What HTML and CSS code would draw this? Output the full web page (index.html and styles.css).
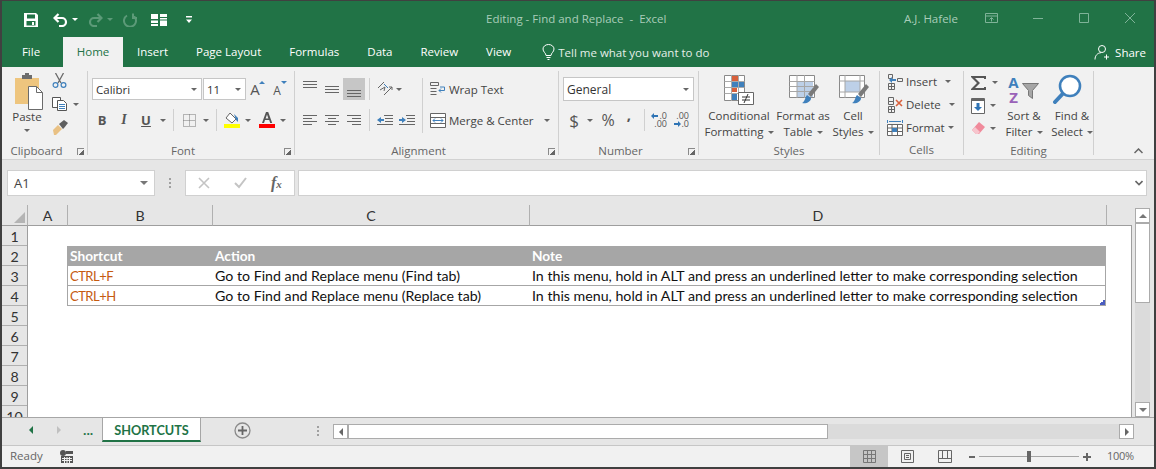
FILE: index.html
```html
<!DOCTYPE html>
<html>
<head>
  <title>Editing - Find and Replace - Excel</title>
  <link rel="stylesheet" href="styles.css">
</head>
<body>
<div class="window">

  <div class="titlebar">
    <div class="qat">
      <svg width="14" height="14" viewBox="0 0 14 14"><path fill="#fff" d="M0 0h12l2 2v12H0z"/><path fill="#217346" d="M3 1.500h8v4H3zM2.500 8h9v4.500h-9z"/><path fill="#fff" d="M8 9h2v3H8z"/></svg>
      <svg class="q-undo" width="15" height="14" viewBox="0 0 15 14"><path fill="none" stroke="#fff" stroke-width="2.200" d="M5.500 1L1.500 5l4 4M2 5h7a4 4 0 0 1 0 8H6"/></svg>
      <span class="caret white q-c1"></span>
      <svg class="q-redo" width="15" height="14" viewBox="0 0 15 14"><path fill="none" stroke="#5c9a78" stroke-width="2.200" d="M9.500 1l4 4-4 4M13 5H6a4 4 0 0 0 0 8h3"/></svg>
      <span class="caret faded q-c2"></span>
      <svg class="q-repeat" width="14" height="14" viewBox="0 0 14 14"><path fill="none" stroke="#5c9a78" stroke-width="2" d="M4 2.500a6 6 0 1 0 6 0M10 .500v4.500h4"/></svg>
      <svg class="q-form" width="16" height="12" viewBox="0 0 16 12"><path fill="#fff" d="M0 0h7v5H0zM9 0h7v3H9zM9 4h7v1.500H9zM0 6.500h7V9H0zM0 10h7v2H0zM9 6.500h7V12H9z"/></svg>
      <svg class="q-more" width="6" height="8" viewBox="0 0 6 8"><path fill="#fff" d="M0 0h6v1.500H0zM0 3.500h6L3 7z"/></svg>
    </div>
    <div class="doc-title">Editing - Find and Replace &nbsp;-&nbsp; Excel</div>
    <div class="user">A.J. Hafele</div>
    <div class="win-btns">
      <svg width="13" height="10" viewBox="0 0 13 10"><path fill="none" stroke="#7fb398" d="M.5.500h12v9H.5zM.5 3h12M6.500 8.500V5M4.500 6.500l2-2 2 2"/></svg>
      <svg class="w-min" width="10" height="10" viewBox="0 0 10 10"><path stroke="#7fb398" d="M0 5.500h10"/></svg>
      <svg class="w-max" width="10" height="10" viewBox="0 0 10 10"><path fill="none" stroke="#7fb398" d="M.5.500h9v9h-9z"/></svg>
      <svg class="w-close" width="10" height="10" viewBox="0 0 10 10"><path stroke="#7fb398" d="M0 0l10 10M10 0L0 10"/></svg>
    </div>
  </div>

  <div class="tabbar">
    <a class="tab tab-file">File</a>
    <a class="tab tab-active">Home</a>
    <a class="tab">Insert</a>
    <a class="tab">Page Layout</a>
    <a class="tab">Formulas</a>
    <a class="tab">Data</a>
    <a class="tab">Review</a>
    <a class="tab">View</a>
    <div class="tell">
      <svg width="13" height="16" viewBox="0 0 13 16"><path fill="none" stroke="#fff" d="M4 11.500C4 9 1 8 1 5a5.500 4.500 0 0 1 11 0c0 3-3 4-3 6.500zM4.500 13.500h4M5.500 15.500h2"/></svg>
      <span>Tell me what you want to do</span>
    </div>
    <div class="share">
      <svg width="16" height="16" viewBox="0 0 16 16"><path fill="none" stroke="#fff" d="M8 1.500a3.500 3.500 0 0 1 0 7 3.500 3.500 0 0 1 0-7zM1 15.500c0-4 2.500-6.500 6-6.800M12.500 10.500v5M10 13h5"/></svg>
      <span>Share</span>
    </div>
  </div>

  <div class="ribbon">

    <div class="group g-clip launcher-group">
      <div class="g-body">
        <div class="paste">
          <svg class="paste-icon" width="30" height="37" viewBox="0 0 30 37"><path fill="#eec57e" d="M1 5h24v26H1z"/><path fill="#6d6d6d" d="M8 2h3V0h4v2h3v4H8z"/><path fill="#fff" stroke="#6b6b6b" d="M14.500 13.500h8l6 6v17h-14z"/><path fill="none" stroke="#6b6b6b" d="M22.500 13.500v6h6"/></svg>
          <span class="paste-label">Paste</span>
          <span class="caret"></span>
        </div>
        <div class="clip-tools">
          <svg width="15" height="15" viewBox="0 0 15 15"><path fill="none" stroke="#6a6a6a" stroke-width="1.300" d="M3.500 0l5.500 10M11.500 0L6 10"/><circle cx="3.500" cy="12" r="2.400" fill="none" stroke="#3f80bc" stroke-width="1.200"/><circle cx="11.500" cy="12" r="2.400" fill="none" stroke="#3f80bc" stroke-width="1.200"/></svg>
          <div class="clip-copy">
            <svg width="15" height="14" viewBox="0 0 15 14"><path fill="#fff" stroke="#555" d="M.500.500h8v10h-8z"/><path fill="#fff" stroke="#555" d="M5.500 3.500h6l3 3v7h-9z"/><path stroke="#3f80bc" d="M7 7.500h6M7 9.500h6M7 11.500h6"/></svg>
            <span class="caret"></span>
          </div>
          <svg width="17" height="15" viewBox="0 0 17 15"><path fill="#e9c184" d="M1 10l5-5 4 4-6 6H2z"/><path fill="#5f5f5f" d="M7 4l5-4 4 3-4 5-1 1z"/></svg>
        </div>
      </div>
      <div class="g-label">Clipboard<span class="launcher"></span></div>
    </div>

    <div class="group g-font launcher-group">
      <div class="g-body g-rows">
        <div class="row">
          <div class="combo combo-font"><span>Calibri</span><span class="caret"></span></div>
          <div class="combo combo-size"><span>11</span><span class="caret"></span></div>
          <div class="tool grow"><span class="letter-a">A</span><i class="tri-up"></i></div>
          <div class="tool shrink"><span class="letter-a small">A</span><i class="tri-down"></i></div>
        </div>
        <div class="row row-font2">
          <div class="tool bold">B</div>
          <div class="tool ital">I</div>
          <div class="tool under">U</div>
          <span class="caret-box"><span class="caret"></span></span>
          <span class="sep"></span>
          <div class="tool"><svg width="13" height="13" viewBox="0 0 13 13"><path fill="none" stroke="#777" stroke-dasharray="1 1" d="M.500.500h12v12H.500zM6.500 .500v12M.500 6.500h12"/></svg></div>
          <span class="caret-box"><span class="caret"></span></span>
          <span class="sep"></span>
          <div class="tool"><svg width="16" height="16" viewBox="0 0 16 16"><path fill="#fff" stroke="#666" d="M6 1l6 6-4 4-6-5z"/><path fill="#3f80bc" d="M10 2l4 4v4l-2-2z"/><path fill="#ffff00" d="M0 12h16v4H0z"/></svg></div>
          <span class="caret-box narrow"><span class="caret"></span></span>
          <div class="tool tool-color"><svg width="16" height="16" viewBox="0 0 16 16"><path fill="#555" d="M7 0h2.200l4 11h-2l-1-3H6l-1 3H3zM6.600 6.400h2.800L8 2.400z"/><path fill="#f00" d="M0 12h16v4H0z"/></svg></div>
          <span class="caret-box narrow"><span class="caret"></span></span>
        </div>
      </div>
      <div class="g-label">Font<span class="launcher"></span></div>
    </div>

    <div class="group g-align launcher-group">
      <div class="g-body">
        <div class="g-rows align-left">
          <div class="row">
            <div class="tool v-top"><svg width="14" height="7" viewBox="0 0 14 7"><path stroke="#666" d="M0 .500h14M0 3.500h14M0 6.500h14"/></svg></div>
            <div class="tool v-mid"><svg width="14" height="7" viewBox="0 0 14 7"><path stroke="#666" d="M0 .500h14M0 3.500h14M0 6.500h14"/></svg></div>
            <div class="tool t-on"><svg width="14" height="7" viewBox="0 0 14 7"><path stroke="#666" d="M0 .500h14M0 3.500h14M0 6.500h14"/></svg></div>
            <span class="sep"></span>
            <div class="tool"><svg width="16" height="16" viewBox="0 0 16 16"><path fill="none" stroke="#666" d="M1 7l6-6M3 9l5-3-1 4M7 14l8-8M12 6h3v3"/><path fill="none" stroke="#3f80bc" d="M7 3l4 4"/></svg></div>
            <span class="caret-box tiny"><span class="caret"></span></span>
          </div>
          <div class="row">
            <div class="tool"><svg width="14" height="11" viewBox="0 0 14 11"><path stroke="#666" d="M0 .500h14M0 3.500h9M0 6.500h14M0 9.500h9"/></svg></div>
            <div class="tool"><svg width="14" height="11" viewBox="0 0 14 11"><path stroke="#666" d="M0 .500h14M3 3.500h8M0 6.500h14M3 9.500h8"/></svg></div>
            <div class="tool"><svg width="14" height="11" viewBox="0 0 14 11"><path stroke="#666" d="M0 .500h14M5 3.500h9M0 6.500h14M5 9.500h9"/></svg></div>
            <span class="sep"></span>
            <div class="tool"><svg width="16" height="11" viewBox="0 0 16 11"><path stroke="#666" d="M7 .500h9M8 3.500h8M8 6.500h8M0 9.500h16"/><path fill="#3f80bc" d="M0 5l4-3v2h3v2H4v2z"/></svg></div>
            <div class="tool"><svg width="16" height="11" viewBox="0 0 16 11"><path stroke="#666" d="M7 .500h9M8 3.500h8M8 6.500h8M0 9.500h16"/><path fill="#3f80bc" d="M7 5L3 2v2H0v2h3v2z"/></svg></div>
          </div>
        </div>
        <span class="sep tall"></span>
        <div class="g-rows align-right">
          <div class="row text-tool">
            <svg width="16" height="15" viewBox="0 0 16 15"><path fill="none" stroke="#666" d="M.500.500h8v3h-8zM.500 6.500h6M.500 9.500h6M.500 12.500h6"/><path fill="none" stroke="#3f80bc" d="M10 5h4.500v3.500H9M11 6.500L9 8.500l2 2"/></svg>
            <span>Wrap Text</span>
          </div>
          <div class="row text-tool">
            <svg width="16" height="15" viewBox="0 0 16 15"><path fill="#fff" stroke="#666" d="M.500.500h15v14H.500zM.500 4.500h15M.500 10.500h15"/><path fill="none" stroke="#3f80bc" d="M3 7.500h10M5 5.500l-2 2 2 2M11 5.500l2 2-2 2"/></svg>
            <span>Merge &amp; Center</span>
            <span class="caret merge-caret"></span>
          </div>
        </div>
      </div>
      <div class="g-label">Alignment<span class="launcher"></span></div>
    </div>

    <div class="group g-number launcher-group">
      <div class="g-body g-rows">
        <div class="row">
          <div class="combo combo-num"><span>General</span><span class="caret"></span></div>
        </div>
        <div class="row">
          <div class="tool sym">$</div>
          <span class="caret-box narrow"><span class="caret"></span></span>
          <div class="tool sym pct">%</div>
          <div class="tool sym comma">,</div>
          <span class="sep"></span>
          <div class="tool dec">
            <div class="dec-line"><i class="arrow left"></i><span>.0</span></div>
            <div class="dec-line"><span>.00</span></div>
          </div>
          <div class="tool dec">
            <div class="dec-line"><span>.00</span></div>
            <div class="dec-line"><i class="arrow"></i><span>.0</span></div>
          </div>
        </div>
      </div>
      <div class="g-label">Number<span class="launcher"></span></div>
    </div>

    <div class="group g-styles">
      <div class="g-body">
        <div class="big big-cond">
          <svg width="30" height="30" viewBox="0 0 30 30"><path fill="#fff" stroke="#8a8a8a" d="M.500.500h20v25H.500z"/><path fill="#d8603c" d="M8 1h6v5H8zM8 12h5v5H8z"/><path fill="#3f80bc" d="M8 6h12v6H8zM8 18h5v7H8z"/><path fill="none" stroke="#aaa" d="M.500 6.500h20M.500 12.500h20M.500 18.500h20M7.500 0v26M14.500 0v26"/><path fill="#fff" stroke="#666" d="M14.500 17.500h15v12h-15z"/><path stroke="#333" d="M18 22h8M18 25h8M20 28l4-9"/></svg>
          <span>Conditional</span>
          <span>Formatting<i class="caret inl"></i></span>
        </div>
        <div class="big big-table">
          <svg width="30" height="30" viewBox="0 0 30 30"><path fill="#fff" stroke="#8a8a8a" d="M.500.500h25v22H.500z"/><path fill="#bdd0e8" d="M8 6h16v16H8z"/><path fill="none" stroke="#a6a6a6" d="M.500 6.500h25M.500 11.500h25M.500 16.500h25M8 0v23M15.500 0v23"/><path fill="#7a7a7a" d="M27 9l3 3-8 10-3-3z"/><path fill="#3f80bc" d="M18 20l4 3c0 4-5 6-9 5 3-1 3-6 5-8z"/></svg>
          <span>Format as</span>
          <span>Table<i class="caret inl"></i></span>
        </div>
        <div class="big big-cell">
          <svg width="30" height="30" viewBox="0 0 30 30"><path fill="#fff" stroke="#8a8a8a" d="M.500.500h25v22H.500z"/><path fill="#bdd0e8" d="M6 6h15v11H6z"/><path fill="none" stroke="#a6a6a6" d="M.500 6h25M.500 17h25M6 0v23M21 0v23"/><path fill="#7a7a7a" d="M27 9l3 3-8 10-3-3z"/><path fill="#3f80bc" d="M18 20l4 3c0 4-5 6-9 5 3-1 3-6 5-8z"/></svg>
          <span>Cell</span>
          <span>Styles<i class="caret inl"></i></span>
        </div>
      </div>
      <div class="g-label">Styles</div>
    </div>

    <div class="group g-cells">
      <div class="g-body g-stack">
        <div class="cell-row">
          <svg width="16" height="16" viewBox="0 0 16 16"><path fill="none" stroke="#666" d="M1.500 9.500h6v6h-6zM1.500 12.500h6M4.500 9.500v6M1.500.500h4v4h-4zM10.500 4.500h5v3h-5z"/><path fill="#3f80bc" d="M2 6l3-3v2h4v2H5v2z"/></svg>
          <span>Insert</span><span class="caret c-ins"></span>
        </div>
        <div class="cell-row">
          <svg width="16" height="16" viewBox="0 0 16 16"><path fill="none" stroke="#666" d="M1.500 9.500h6v6h-6zM1.500 12.500h6M4.500 9.500v6M1.500.500h5v4h-5zM1.500 4.500h5v3h-5z"/><path stroke="#d8603c" stroke-width="1.600" d="M9 3l6 6M15 3l-6 6"/></svg>
          <span>Delete</span><span class="caret c-del"></span>
        </div>
        <div class="cell-row">
          <svg width="16" height="16" viewBox="0 0 16 16"><path fill="#fff" stroke="#666" d="M.500 4.500h15v11H.500zM.500 8h15M.500 11.500h15M5 4.500v11M10.500 4.500v11"/><path fill="#3f80bc" d="M5 8h5v4H5zM0 0h1v3H0zM15 0h1v3h-1zM2 1h12v1H2z"/></svg>
          <span>Format</span><span class="caret c-fmt"></span>
        </div>
      </div>
      <div class="g-label">Cells</div>
    </div>

    <div class="group g-edit">
      <div class="g-body">
        <div class="edit-col">
          <div class="edit-row e1">
            <svg width="16" height="14" viewBox="0 0 16 14"><path fill="#555" d="M0 0h15v3h-2V2H4l5 5-5 5h9v-1h2v3H0v-1l6-6-6-6z"/></svg>
            <span class="caret"></span>
          </div>
          <div class="edit-row e2">
            <svg width="14" height="16" viewBox="0 0 14 16"><path fill="#fff" stroke="#666" d="M.500.500h13v15h-13z"/><path fill="#666" d="M1 1h12v2H1z"/><path fill="#2f74b5" d="M5.500 5h3v4H11l-4 4-4-4h2.500z"/></svg>
            <span class="caret"></span>
          </div>
          <div class="edit-row e3">
            <svg width="14" height="13" viewBox="0 0 14 13"><path fill="#f08a9b" d="M8 0l6 5-6 7H5L1 8z"/><path fill="#f7c5cd" d="M1 8l3-3 5 5-2 2H5z"/></svg>
            <span class="caret"></span>
          </div>
        </div>
        <div class="big big-sort">
          <div class="sort-icon">
            <div class="az"><span class="az-a">A</span><span class="az-z">Z</span></div>
            <svg width="17" height="17" viewBox="0 0 17 17"><path fill="#a6a6a6" stroke="#777" d="M.500.500h16l-6 7v8l-4-3v-5z"/></svg>
          </div>
          <span>Sort &amp;</span>
          <span>Filter<i class="caret inl"></i></span>
        </div>
        <div class="big big-find">
          <svg width="30" height="30" viewBox="0 0 30 30"><circle cx="18" cy="12" r="10" fill="#fff" stroke="#3f80bc" stroke-width="2.600"/><path stroke="#3f80bc" stroke-width="4" stroke-linecap="round" d="M10.500 20L3 28"/></svg>
          <span>Find &amp;</span>
          <span>Select<i class="caret inl"></i></span>
        </div>
      </div>
      <div class="g-label">Editing</div>
    </div>

    <svg class="collapse" width="9" height="6" viewBox="0 0 9 6"><path fill="none" stroke="#666" stroke-width="1.500" d="M.500 5l4-4 4 4"/></svg>
  </div>

  <div class="formula-bar">
    <div class="name-box"><span>A1</span><span class="caret dark"></span></div>
    <div class="dots"></div>
    <div class="fx-box">
      <svg width="12" height="12" viewBox="0 0 12 12"><path stroke="#c4c4c4" stroke-width="1.600" d="M1 1l10 10M11 1L1 11"/></svg>
      <svg class="fx-ok" width="13" height="12" viewBox="0 0 13 12"><path fill="none" stroke="#c4c4c4" stroke-width="2" d="M1 6l4 4 7-9"/></svg>
      <span class="fx">f<small>x</small></span>
    </div>
    <div class="formula-input">
      <svg width="8" height="6" viewBox="0 0 8 6"><path fill="none" stroke="#666" stroke-width="1.600" d="M.500 1l3.500 3.500L7.500 1"/></svg>
    </div>
  </div>

  <div class="sheet-area">
    <div class="grid">
      <div class="corner"><i></i></div>
      <div class="col-h">A</div>
      <div class="col-h">B</div>
      <div class="col-h">C</div>
      <div class="col-h">D</div>
      <div class="col-h col-rest"></div>

      <div class="row-h">1</div><div class="cell span"></div>

      <div class="row-h">2</div><div class="cell lead"></div>
      <div class="cell th">Shortcut</div>
      <div class="cell th">Action</div>
      <div class="cell th">Note</div>
      <div class="cell end"></div>

      <div class="row-h">3</div><div class="cell lead"></div>
      <div class="cell td first key">CTRL+F</div>
      <div class="cell td">Go to Find and Replace menu (Find tab)</div>
      <div class="cell td last">In this menu, hold in ALT and press an underlined letter to make corresponding selection</div>
      <div class="cell end"></div>

      <div class="row-h">4</div><div class="cell lead"></div>
      <div class="cell td first key">CTRL+H</div>
      <div class="cell td">Go to Find and Replace menu (Replace tab)</div>
      <div class="cell td last handle">In this menu, hold in ALT and press an underlined letter to make corresponding selection</div>
      <div class="cell end"></div>

      <div class="row-h">5</div><div class="cell span"></div>
      <div class="row-h">6</div><div class="cell span"></div>
      <div class="row-h">7</div><div class="cell span"></div>
      <div class="row-h">8</div><div class="cell span"></div>
      <div class="row-h">9</div><div class="cell span"></div>
      <div class="row-h">10</div><div class="cell span"></div>
    </div>
    <div class="vscroll">
      <div class="sb-btn"><i class="tri-u"></i></div>
      <div class="sb-track"><div class="sb-thumb"></div></div>
      <div class="sb-btn"><i class="tri-d"></i></div>
    </div>
  </div>

  <div class="sheet-tabs">
    <div class="nav-arrows">
      <i class="tri-l green"></i>
      <i class="tri-r grey"></i>
      <span class="more">...</span>
    </div>
    <div class="sheet-tab">SHORTCUTS</div>
    <svg class="add-sheet" width="17" height="17" viewBox="0 0 17 17"><circle cx="8.500" cy="8.500" r="7.500" fill="none" stroke="#8a8a8a" stroke-width="1.300"/><path stroke="#666" stroke-width="1.800" d="M4 8.500h9M8.500 4v9"/></svg>
    <div class="dots tab-dots"></div>
    <div class="hscroll">
      <div class="sb-btn"><i class="tri-l"></i></div>
      <div class="sb-thumb-h"></div>
      <div class="sb-track-h"></div>
      <div class="sb-btn"><i class="tri-r"></i></div>
    </div>
  </div>

  <div class="statusbar">
    <span class="ready">Ready</span>
    <svg class="macro" width="13" height="13" viewBox="0 0 13 13"><circle cx="3" cy="3" r="3" fill="#555"/><path fill="#555" d="M6 1h7v3H6zM1 6h12v7H1z"/><path stroke="#f1f1f1" d="M2 8.500h10M2 10.500h10M4.500 7v6M7 7v6M9.500 7v6"/></svg>
    <div class="views">
      <div class="view on"><svg width="13" height="13" viewBox="0 0 13 13"><path fill="none" stroke="#777" d="M.500.500h12v12H.500zM.500 4.500h12M.500 8.500h12M4.500.500v12M8.500.500v12"/></svg></div>
      <div class="view"><svg width="13" height="13" viewBox="0 0 13 13"><path fill="none" stroke="#666" d="M.500.500h12v12H.500zM3.500 3.500h6v6h-6zM5 5.500h3M5 7.500h3"/></svg></div>
      <div class="view"><svg width="14" height="13" viewBox="0 0 14 13"><path fill="none" stroke="#666" d="M.500.500h13v12H.500zM.500 8.500h13M4.500.500v8M9.500.500v8"/></svg></div>
    </div>
    <div class="zoom">
      <span class="z-btn"></span>
      <div class="z-track"><i></i></div>
      <span class="z-btn plus"></span>
    </div>
    <span class="zoom-val">100%</span>
  </div>
</div>
</body>
</html>
```

FILE: styles.css
```css
* {
  box-sizing: border-box;
}

html, body {
  margin: 0;
  padding: 0;
  overflow: hidden;
}

body {
  font-family: "Open Sans", sans-serif;
  font-size: 11.500px;
  color: #444;
  background: #fff;
}

svg {
  display: block;
  flex-shrink: 0;
}

.window {
  width: 1156px;
  height: 469px;
  display: flex;
  flex-direction: column;
  border: solid #404040;
  border-width: 1px 2px 2px 2px;
  background: #e6e6e6;
  overflow: hidden;
}

/* title bar */
.titlebar {
  height: 36px;
  flex: none;
  display: flex;
  align-items: center;
  padding-bottom: 2px;
  background: #217346;
  color: #a9cdb9;
}

.qat {
  width: 484px;
  display: flex;
  align-items: center;
  padding-left: 22px;
  padding-top: 3px;
}

.q-undo { margin-left: 15px; }
.q-c1 { margin-left: 4px; }
.q-redo { margin-left: 10px; }
.q-c2 { margin-left: 4px; }
.q-repeat { margin-left: 10px; }
.q-form { margin-left: 14px; }
.q-more { margin-left: 19px; }

.doc-title {
  width: 418px;
  white-space: nowrap;
}

.user {
  width: 81px;
  white-space: nowrap;
}

.win-btns {
  display: flex;
  align-items: center;
}

.w-min { margin-left: 35px; }
.w-max { margin-left: 36px; }
.w-close { margin-left: 36px; }

/* tabs */
.tabbar {
  height: 30px;
  flex: none;
  display: flex;
  align-items: center;
  background: #217346;
  color: #fff;
}

.tab {
  height: 30px;
  line-height: 30px;
  padding: 0 14px;
  white-space: nowrap;
}

.tab-file {
  width: 61px;
  padding: 0 3px 0 0;
  text-align: center;
}

.tab-active {
  width: 60px;
  padding: 0;
  text-align: center;
  background: #f1f1f1;
  color: #217346;
}

.tell {
  display: flex;
  align-items: center;
  gap: 3px;
  margin-left: 17px;
  color: #e4efe9;
  white-space: nowrap;
}

.share {
  display: flex;
  align-items: center;
  gap: 5px;
  margin-left: auto;
  padding-right: 8px;
}

/* ribbon */
.ribbon {
  position: relative;
  height: 93px;
  flex: none;
  display: flex;
  align-items: flex-start;
  padding-top: 4px;
  background: #f1f1f1;
  border-bottom: 1px solid #d2d2d2;
}

.group {
  position: relative;
  height: 84px;
  flex: none;
  display: flex;
  flex-direction: column;
  border-right: 1px solid #d0d0d0;
}

.g-clip { width: 86px; }
.g-font { width: 207px; }
.g-align { width: 264px; }
.g-number { width: 140px; }
.g-styles { width: 181px; }
.g-cells { width: 84px; }
.g-edit { width: 130px; }

.g-body {
  height: 74px;
  display: flex;
  flex: none;
}

.g-rows {
  display: flex;
  flex-direction: column;
  padding-top: 7px;
  gap: 9px;
}

.g-label {
  position: relative;
  height: 10px;
  line-height: 12px;
  text-align: center;
  color: #666;
  white-space: nowrap;
}

.launcher-group .g-label {
  padding-right: 16px;
}

.launcher {
  position: absolute;
  right: 3px;
  top: 3px;
  width: 7px;
  height: 7px;
  border: solid #8a8a8a;
  border-width: 1px 0 0 1px;
  background: linear-gradient(135deg, transparent 55%, #666 55%);
}

.row {
  display: flex;
  align-items: center;
  height: 22px;
}

.tool {
  position: relative;
  width: 22px;
  height: 22px;
  flex: none;
  display: flex;
  align-items: center;
  justify-content: center;
}

.v-top { align-items: flex-start; padding-top: 3px; }
.v-mid { align-items: center; }
.t-on { align-items: flex-end; padding-bottom: 3px; background: #c6c6c6; }

.sep {
  width: 1px;
  height: 22px;
  flex: none;
  margin: 0 4px;
  background: #d0d0d0;
}

.sep.tall {
  height: 55px;
  margin: 7px 0 0;
}

.caret {
  display: inline-block;
  width: 0;
  height: 0;
  flex: none;
  border: solid transparent;
  border-width: 3px 3px 0;
  border-top-color: #666;
}

.caret.white { border-top-color: #fff; }
.caret.faded { border-top-color: #5c9a78; }
.caret.dark { border-width: 4px 4px 0; border-top-color: #777; }

.caret.inl {
  margin-left: 4px;
  vertical-align: middle;
}

.caret-box {
  width: 12px;
  height: 22px;
  flex: none;
  display: flex;
  align-items: center;
  justify-content: center;
}

.caret-box.narrow { width: 10px; }
.caret-box.tiny { width: 6px; }

/* clipboard */
.paste {
  width: 50px;
  flex: none;
  display: flex;
  flex-direction: column;
  align-items: center;
  padding-top: 2px;
}

.paste-icon {
  margin-left: 4px;
}

.paste-label {
  margin-top: -2px;
  line-height: 17px;
}

.paste .caret { margin-top: 4px; }

.clip-tools {
  display: flex;
  flex-direction: column;
  align-items: flex-start;
  gap: 9px;
  padding-top: 2px;
}

.clip-copy {
  display: flex;
  align-items: center;
  gap: 6px;
}

/* font */
.g-font .g-rows { padding-left: 4px; }

.combo {
  height: 22px;
  display: flex;
  align-items: center;
  justify-content: space-between;
  padding: 0 4px 0 3px;
  background: #fff;
  border: 1px solid #c6c6c6;
  color: #333;
}

.combo-font { width: 110px; }
.combo-size { width: 43px; margin-left: 1px; }
.combo-num { width: 131px; height: 24px; font-size: 12px; }

.grow { margin-left: -2px; }

.letter-a {
  font-size: 15px;
  color: #555;
}

.letter-a.small { font-size: 12px; margin-top: 3px; }

.tri-up, .tri-down {
  position: absolute;
  top: 3px;
  right: 1px;
  border: solid transparent;
  border-width: 0 3px 3px;
  border-bottom-color: #3f80bc;
}

.tri-down {
  border-width: 3px 3px 0;
  border-top-color: #3f80bc;
}

.row-font2 { margin-left: -1px; }

.bold, .ital, .under {
  font-family: "Liberation Serif", serif;
  font-size: 14px;
  color: #555;
}

.bold { font-family: "Open Sans", sans-serif; font-weight: 700; font-size: 13px; }
.ital { font-style: italic; font-weight: 700; }
.under { font-family: "Open Sans", sans-serif; font-weight: 700; font-size: 13px; text-decoration: underline; }

.tool-color { margin-left: 3px; }

/* alignment */
.align-left {
  width: 127px;
  padding-left: 4px;
}

.align-right {
  padding-left: 7px;
}

.text-tool {
  gap: 3px;
  white-space: nowrap;
}

.merge-caret { margin-left: 7px; }

/* number */
.g-number .g-rows { padding-left: 4px; }

.sym {
  font-size: 17px;
  color: #555;
}

.pct { margin-left: 2px; font-size: 16px; }

.comma {
  margin-left: -1px;
  font-weight: 700;
  font-size: 15px;
  padding-bottom: 13px;
}

.dec {
  flex-direction: column;
  align-items: flex-end;
  padding-right: 4px;
  font-size: 9px;
  line-height: 8px;
  color: #555;
}

.dec-line {
  display: flex;
  align-items: center;
  gap: 1px;
}

.arrow {
  position: relative;
  width: 6px;
  height: 2px;
  background: #2f74b5;
}

.arrow::after {
  content: "";
  position: absolute;
  right: -1px;
  top: -2px;
  border: solid transparent;
  border-width: 3px 0 3px 3px;
  border-left-color: #2f74b5;
}

.arrow.left::after {
  right: auto;
  left: -1px;
  border-width: 3px 3px 3px 0;
  border-right-color: #2f74b5;
}

/* big buttons */
.big {
  flex: none;
  display: flex;
  flex-direction: column;
  align-items: center;
  line-height: 16px;
  white-space: nowrap;
  padding-top: 4px;
}

.big svg { margin-bottom: 3px; }

.big-cond { width: 80px; }
.big-table { width: 48px; }
.big-table svg { margin-left: 2px; }
.big-cell { width: 52px; }
.big-cell svg { margin-left: 2px; }
.big-sort { width: 48px; }
.big-find { width: 48px; }
.big-find svg { margin-right: 10px; margin-top: -1px; margin-bottom: 4px; }

.sort-icon {
  height: 33px;
  display: flex;
  align-items: flex-start;
  margin-left: -2px;
}

.sort-icon svg {
  margin: 8px 0 0 2px;
}

.az {
  display: flex;
  flex-direction: column;
  align-items: center;
  width: 12px;
  font-weight: 700;
  font-size: 15px;
  line-height: 15px;
}

.az-a { color: #3f80bc; }
.az-z { color: #9a62b8; }

/* cells */
.g-stack {
  flex-direction: column;
  margin-top: -1px;
}

.cell-row {
  height: 23px;
  flex: none;
  display: flex;
  align-items: center;
  padding-left: 7px;
  gap: 3px;
  white-space: nowrap;
}

.c-ins { margin-left: 5px; }
.c-del { margin-left: 5px; }
.c-fmt { margin-left: 0; }

/* editing */
.edit-col {
  width: 36px;
  flex: none;
}

.edit-row {
  height: 23px;
  display: flex;
  align-items: center;
  padding-left: 7px;
  gap: 5px;
}

.collapse {
  position: absolute;
  right: 11px;
  bottom: 5px;
}

/* formula bar */
.formula-bar {
  height: 45px;
  flex: none;
  display: flex;
  align-items: flex-start;
  padding: 10px 7px 0 5px;
}

.name-box {
  width: 148px;
  height: 26px;
  display: flex;
  align-items: center;
  justify-content: space-between;
  padding: 0 6px;
  background: #fff;
  border: 1px solid #d0d0d0;
  font-size: 13px;
}

.dots {
  width: 2px;
  height: 10px;
  margin: 8px 14px 0 14px;
  background: repeating-linear-gradient(#a0a0a0 0 2px, transparent 2px 4px);
}

.fx-box {
  width: 110px;
  height: 26px;
  flex: none;
  display: flex;
  align-items: center;
  padding-left: 12px;
  background: #fff;
  border: 1px solid #d0d0d0;
}

.fx-ok {
  margin-left: 24px;
}

.fx {
  margin-left: 24px;
  font-family: "Liberation Serif", serif;
  font-style: italic;
  font-weight: 700;
  font-size: 16px;
  color: #666;
}

.fx small { font-size: 11px; }

.formula-input {
  width: 849px;
  height: 26px;
  margin-left: 3px;
  display: flex;
  align-items: center;
  justify-content: flex-end;
  padding-right: 3px;
  background: #fff;
  border: 1px solid #d0d0d0;
}

/* sheet */
.sheet-area {
  height: 212px;
  flex: none;
  display: flex;
  overflow: hidden;
}

.grid {
  width: 1130px;
  flex: none;
  display: grid;
  grid-template-columns: 25px 40px 145px 317px 577px 26px;
  grid-template-rows: 21px;
  grid-auto-rows: 20px;
  font-family: "Lato", sans-serif;
  font-size: 14.200px;
  color: #111;
}

.corner {
  position: relative;
  border-bottom: 1px solid #9e9e9e;
}

.corner i {
  position: absolute;
  right: 2px;
  bottom: 2px;
  border: solid transparent;
  border-width: 0 0 11px 11px;
  border-bottom-color: #b4b4b4;
}

.col-h {
  display: flex;
  align-items: center;
  justify-content: center;
  padding-top: 1px;
  border-bottom: 1px solid #9e9e9e;
  border-left: 1px solid #b0b0b0;
  color: #333;
}

.row-h {
  display: flex;
  align-items: center;
  justify-content: center;
  padding-top: 1px;
  border-bottom: 1px solid #b0b0b0;
  color: #333;
}

.cell {
  background: #fff;
  white-space: nowrap;
  padding-left: 3px;
  line-height: 19px;
}

.cell.span {
  grid-column: 2 / -1;
  border-left: 1px solid #9e9e9e;
  border-right: 1px solid #9e9e9e;
}

.lead { border-left: 1px solid #9e9e9e; }
.end { border-right: 1px solid #9e9e9e; }

.th {
  background: #a6a6a6;
  color: #fff;
  font-weight: 700;
  font-size: 13.700px;
}

.td {
  border-bottom: 1px solid #a6a6a6;
}

.first {
  border-left: 1px solid #a6a6a6;
  padding-left: 2px;
}

.last {
  border-right: 1px solid #a6a6a6;
}

.key {
  color: #c55a11;
  font-size: 13px;
  line-height: 20px;
  letter-spacing: -0.500px;
}

.handle {
  position: relative;
}

.handle::after {
  content: "";
  position: absolute;
  right: 0;
  bottom: 0;
  width: 5px;
  height: 5px;
  background: linear-gradient(135deg, transparent 40%, #4a5cc0 40%);
}

.vscroll {
  width: 15px;
  margin-left: 3px;
  padding-top: 3px;
  display: flex;
  flex-direction: column;
}

.sb-btn {
  width: 15px;
  height: 15px;
  flex: none;
  display: flex;
  align-items: center;
  justify-content: center;
  background: #fff;
  border: 1px solid #ababab;
}

.sb-track {
  flex: 1;
  background: #dbdbdb;
}

.sb-thumb {
  height: 80px;
  background: #fff;
  border: 1px solid #ababab;
}

.tri-u, .tri-d, .tri-l, .tri-r {
  display: block;
  border: solid transparent;
}

.tri-u { border-width: 0 4px 4px; border-bottom-color: #777; }
.tri-d { border-width: 4px 4px 0; border-top-color: #777; }
.tri-l { border-width: 4px 4px 4px 0; border-right-color: #666; }
.tri-r { border-width: 4px 0 4px 4px; border-left-color: #666; }
.tri-l.green { border-right-color: #217346; }
.tri-r.grey { border-left-color: #c0c0c0; }

/* sheet tabs */
.sheet-tabs {
  position: relative;
  height: 28px;
  flex: none;
  display: flex;
  align-items: flex-start;
  border-top: 1px solid #a6a6a6;
}

.nav-arrows {
  width: 100px;
  height: 24px;
  display: flex;
  align-items: center;
  padding-left: 27px;
  color: #217346;
}

.nav-arrows .tri-r { margin-left: 24px; }

.more {
  margin-left: 22px;
  font-weight: 700;
  font-size: 12px;
  line-height: 20px;
  padding-top: 2px;
}

.sheet-tab {
  width: 99px;
  height: 25px;
  margin-top: -1px;
  line-height: 24px;
  text-align: center;
  background: #fff;
  color: #217346;
  font-family: "Lato", sans-serif;
  font-weight: 700;
  font-size: 12.700px;
  border: solid #a6a6a6;
  border-width: 1px 1px 0 1px;
  border-bottom: 2px solid #217346;
}

.add-sheet {
  margin-left: 33px;
  margin-top: 4px;
}

.tab-dots {
  margin: 8px 0 0 66px;
}

.hscroll {
  display: flex;
  margin-left: 14px;
  margin-top: 6px;
  height: 15px;
}

.sb-thumb-h {
  width: 480px;
  height: 15px;
  background: #fff;
  border: 1px solid #ababab;
}

.sb-track-h {
  width: 291px;
  height: 15px;
  background: #dbdbdb;
}

/* status bar */
.statusbar {
  height: 22px;
  flex: none;
  display: flex;
  align-items: center;
  padding: 0 20px 0 8px;
  background: #f1f1f1;
  border-top: 1px solid #c6c6c6;
  color: #666;
}

.ready {
  margin-top: -2px;
}

.macro {
  margin-left: 17px;
}

.views {
  display: flex;
  height: 100%;
  margin-left: auto;
}

.view {
  width: 38px;
  height: 100%;
  display: flex;
  align-items: center;
  justify-content: center;
}

.view.on {
  background: #c6c6c6;
}

.zoom {
  display: flex;
  align-items: center;
  margin-left: 5px;
}

.z-btn {
  position: relative;
  width: 6px;
  height: 2px;
  background: #666;
}

.z-btn.plus {
  width: 8px;
}

.z-btn.plus::after {
  content: "";
  position: absolute;
  left: 3px;
  top: -3px;
  width: 2px;
  height: 8px;
  background: #666;
}

.z-track {
  position: relative;
  width: 100px;
  height: 1px;
  margin: 0 4px;
  background: #a6a6a6;
}

.z-track i {
  position: absolute;
  left: 48px;
  top: -5px;
  width: 4px;
  height: 11px;
  background: #666;
}

.zoom-val {
  width: 27px;
  margin-left: 16px;
  margin-top: -2px;
  font-size: 11px;
  letter-spacing: -0.300px;
  white-space: nowrap;
}
```
